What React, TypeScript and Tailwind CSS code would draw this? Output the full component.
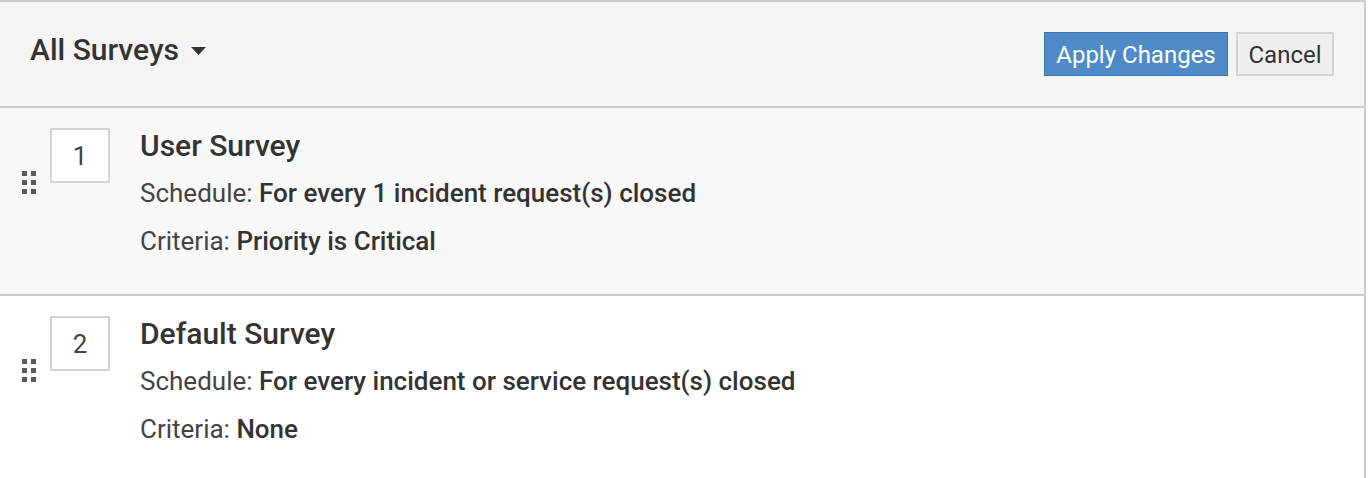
const SURVEYS = [
  {
    order: 1,
    name: "User Survey",
    schedule: "For every 1 incident request(s) closed",
    criteria: "Priority is Critical",
    shaded: true,
  },
  {
    order: 2,
    name: "Default Survey",
    schedule: "For every incident or service request(s) closed",
    criteria: "None",
    shaded: false,
  },
];

function DragHandle() {
  return (
    <div className="mt-[43px] grid w-[14px] grid-cols-2 gap-x-[4px] gap-y-[4px]">
      {[0, 1, 2, 3, 4, 5].map((i) => (
        <span key={i} className="h-[5px] w-[5px] bg-[#5a5a5a]" />
      ))}
    </div>
  );
}

function SurveyRow({ survey }: { survey: (typeof SURVEYS)[number] }) {
  return (
    <div
      className={`flex items-start border-b-2 border-[#cccccc] pb-[29px] pl-[22px] pt-[20px] ${
        survey.shaded ? "bg-[#f8f8f8]" : "bg-white"
      }`}
    >
      <DragHandle />
      <div className="ml-[14px] flex h-[55px] w-[60px] items-center justify-center border-2 border-[#d4d4d4] bg-white pt-[2px] text-[26px] text-[#444]">
        {survey.order}
      </div>
      <div className="ml-[30px]">
        <div className="text-[30px] font-medium leading-[36px] text-[#333]">
          {survey.name}
        </div>
        <div className="mt-[5px] text-[26px] leading-[48px] text-[#444]">
          Schedule: <span className="font-medium text-[#333]">{survey.schedule}</span>
        </div>
        <div className="text-[26px] leading-[48px] text-[#444]">
          Criteria: <span className="font-medium text-[#333]">{survey.criteria}</span>
        </div>
      </div>
    </div>
  );
}

export default function App() {
  return (
    <div className="h-[478px] w-[1368px] overflow-hidden bg-white font-['Roboto',sans-serif]">
      <div className="w-[1366px] border-r-2 border-t-2 border-[#cccccc]">
        <div className="flex items-start justify-between border-b-2 border-[#cccccc] bg-[#f4f4f4] py-[30px] pl-[30px] pr-[30px]">
          <div className="flex items-center text-[30px] font-medium leading-[36px] text-[#333]">
            All Surveys
            <svg className="ml-[12px] mt-[2px]" width="15" height="8" viewBox="0 0 15 8">
              <path d="M0 0 L15 0 L7.5 8 Z" fill="#333" />
            </svg>
          </div>
          <div className="flex gap-[8px]">
            <button className="flex h-[44px] w-[184px] items-center justify-center border border-[#3d75b1] bg-[#4e8ac8] pt-[2px] text-[24px] text-white">
              Apply Changes
            </button>
            <button className="flex h-[44px] w-[98px] items-center justify-center border-2 border-[#d3d3d3] bg-[#efefef] pt-[2px] text-[24px] text-[#333]">
              Cancel
            </button>
          </div>
        </div>
        {SURVEYS.map((s) => (
          <SurveyRow key={s.order} survey={s} />
        ))}
      </div>
    </div>
  );
}
